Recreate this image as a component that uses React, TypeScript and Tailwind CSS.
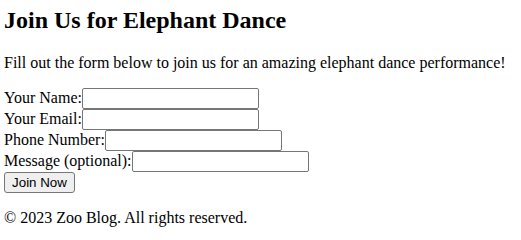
const fields = [
  { id: "name", label: "Your Name:", type: "text" },
  { id: "email", label: "Your Email:", type: "email" },
  { id: "phone", label: "Phone Number:", type: "tel" },
  { id: "message", label: "Message (optional):", type: "text" },
];

export default function App() {
  return (
    <div className="px-[4px] pt-[7px] font-['Liberation_Serif','Times_New_Roman',serif] text-[16px] leading-[normal] text-black bg-white">
      <h2 className="text-[24px] font-bold mb-[19.92px]">Join Us for Elephant Dance</h2>
      <p className="mb-[16px]">
        Fill out the form below to join us for an amazing elephant dance performance!
      </p>
      <form className="mb-[16px]" onSubmit={(e) => e.preventDefault()}>
        {fields.map((f) => (
          <div key={f.id} className="flex items-baseline h-[21px]">
            <label htmlFor={f.id}>{f.label}</label>
            <input
              id={f.id}
              type={f.type}
              className="w-[177px] h-[21px] px-[2px] py-[1px] border border-[#767676] rounded-[2px] bg-white font-['Liberation_Sans',Arial,sans-serif] text-[13.33px]"
            />
          </div>
        ))}
        <div className="h-[21px]">
          <button
            type="submit"
            className="w-[71px] h-[21px] px-[6px] border border-[#767676] rounded-[3px] bg-[#efefef] font-['Liberation_Sans',Arial,sans-serif] text-[13.33px] text-black leading-[normal]"
          >
            Join Now
          </button>
        </div>
      </form>
      <p>© 2023 Zoo Blog. All rights reserved.</p>
    </div>
  );
}
